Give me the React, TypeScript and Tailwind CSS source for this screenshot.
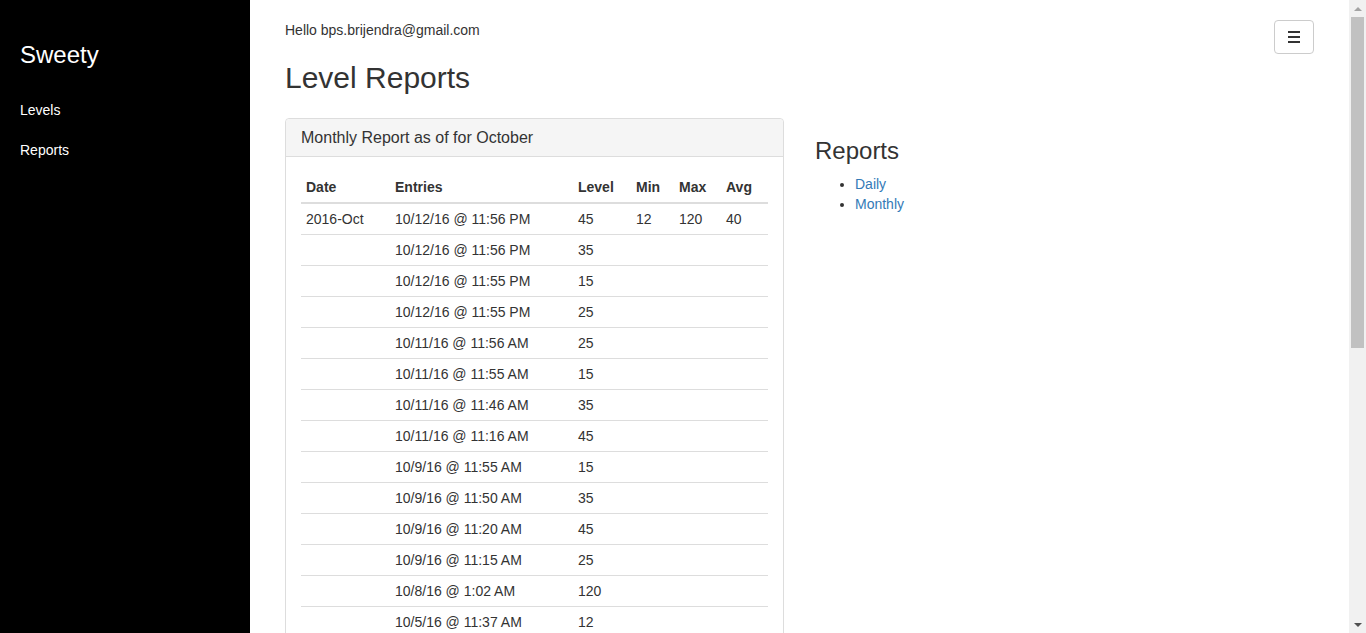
const rows: [string, string, string, string, string, string][] = [
    ['2016-Oct', '10/12/16 @ 11:56 PM', '45', '12', '120', '40'],
    ['', '10/12/16 @ 11:56 PM', '35', '', '', ''],
    ['', '10/12/16 @ 11:55 PM', '15', '', '', ''],
    ['', '10/12/16 @ 11:55 PM', '25', '', '', ''],
    ['', '10/11/16 @ 11:56 AM', '25', '', '', ''],
    ['', '10/11/16 @ 11:55 AM', '15', '', '', ''],
    ['', '10/11/16 @ 11:46 AM', '35', '', '', ''],
    ['', '10/11/16 @ 11:16 AM', '45', '', '', ''],
    ['', '10/9/16 @ 11:55 AM', '15', '', '', ''],
    ['', '10/9/16 @ 11:50 AM', '35', '', '', ''],
    ['', '10/9/16 @ 11:20 AM', '45', '', '', ''],
    ['', '10/9/16 @ 11:15 AM', '25', '', '', ''],
    ['', '10/8/16 @ 1:02 AM', '120', '', '', ''],
    ['', '10/5/16 @ 11:37 AM', '12', '', '', ''],
    ['', '10/5/16 @ 11:30 AM', '25', '', '', ''],
    ['', '10/5/16 @ 11:12 AM', '35', '', '', ''],
    ['', '10/4/16 @ 10:45 PM', '45', '', '', ''],
    ['', '10/4/16 @ 10:40 PM', '15', '', '', ''],
    ['', '10/4/16 @ 9:58 AM', '25', '', '', ''],
    ['', '10/3/16 @ 11:56 PM', '35', '', '', ''],
];

const cellClass = 'px-[5px] py-[5px] leading-5 text-left align-top';

export default function App() {
    return (
        <div className="flex bg-white text-[14px] text-[#333] font-['Liberation_Sans',Arial,sans-serif]">
            {/* Sidebar */}
            <aside className="sticky top-0 h-screen w-[250px] shrink-0 bg-black text-white">
                <div className="pl-5 pt-[40px] text-[24px] leading-[30px]">Sweety</div>
                <nav className="mt-5 flex flex-col">
                    <a href="#" className="pl-5 py-[10px] leading-5 text-white">Levels</a>
                    <a href="#" className="pl-5 py-[10px] leading-5 text-white">Reports</a>
                </nav>
            </aside>

            {/* Main */}
            <main className="min-w-0 flex-1 pl-[35px] pr-[35px] pt-5 pb-[5px]">
                <div className="flex items-start justify-between">
                    <p className="leading-5">Hello bps.brijendra@gmail.com</p>
                    <button
                        className="flex h-[34px] w-[40px] flex-col items-center justify-center gap-[3px] rounded-[4px] border border-[#ccc] bg-white"
                        aria-label="Toggle menu"
                    >
                        <span className="block h-[2px] w-[12px] bg-[#333]" />
                        <span className="block h-[2px] w-[12px] bg-[#333]" />
                        <span className="block h-[2px] w-[12px] bg-[#333]" />
                    </button>
                </div>
                <h1 className="mt-[7px] mb-6 text-[30px] leading-[33px] font-normal">Level Reports</h1>

                <div className="grid grid-cols-2 gap-[31px]">
                    <div className="self-start rounded-[4px] border border-[#ddd]">
                        <div className="rounded-t-[4px] border-b border-[#ddd] bg-[#f5f5f5] px-[15px] py-[10px] text-[16px] leading-[17px]">
                            Monthly Report as of for October
                        </div>
                        <div className="p-[15px]">
                            <table className="w-full border-collapse">
                                <thead>
                                    <tr className="border-b-2 border-[#ddd]">
                                        <th className={`${cellClass} w-[89px] font-bold`}>Date</th>
                                        <th className={`${cellClass} w-[183px] font-bold`}>Entries</th>
                                        <th className={`${cellClass} w-[58px] font-bold`}>Level</th>
                                        <th className={`${cellClass} w-[43px] font-bold`}>Min</th>
                                        <th className={`${cellClass} w-[47px] font-bold`}>Max</th>
                                        <th className={`${cellClass} font-bold`}>Avg</th>
                                    </tr>
                                </thead>
                                <tbody>
                                    {rows.map((r, i) => (
                                        <tr key={i} className={i > 0 ? 'border-t border-[#ddd]' : ''}>
                                            {r.map((c, j) => (
                                                <td key={j} className={cellClass}>{c}</td>
                                            ))}
                                        </tr>
                                    ))}
                                </tbody>
                            </table>
                        </div>
                    </div>

                    <div>
                        <h3 className="mt-5 mb-[10px] text-[24px] leading-[26px]">Reports</h3>
                        <ul className="list-disc pl-10 leading-5">
                            <li><a href="#" className="text-[#337ab7]">Daily</a></li>
                            <li><a href="#" className="text-[#337ab7]">Monthly</a></li>
                        </ul>
                    </div>
                </div>
            </main>

            {/* Window scrollbar */}
            <div className="sticky top-0 flex h-screen w-[17px] shrink-0 flex-col bg-[#f1f1f1]">
                <div className="flex h-[17px] items-center justify-center">
                    <span className="h-0 w-0 border-x-[4px] border-b-[4px] border-x-transparent border-b-[#a3a3a3]" />
                </div>
                <div className="mx-[2px] h-[331px] bg-[#c1c1c1]" />
                <div className="flex-1" />
                <div className="flex h-[17px] items-center justify-center">
                    <span className="h-0 w-0 border-x-[4px] border-t-[4px] border-x-transparent border-t-[#505050]" />
                </div>
            </div>
        </div>
    );
}
